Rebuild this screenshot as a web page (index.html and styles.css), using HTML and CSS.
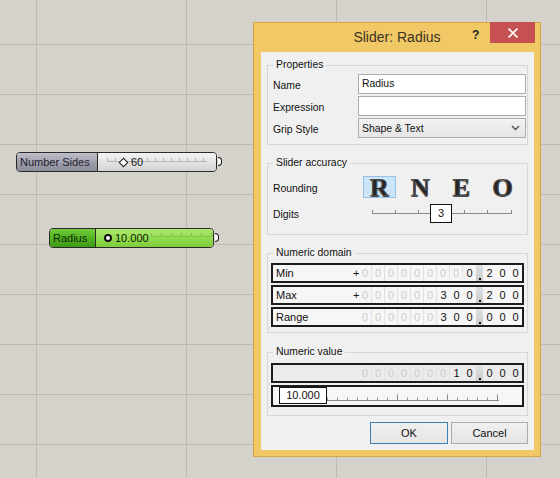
FILE: index.html
```html
<!DOCTYPE html>
<html>
<head>
<meta charset="utf-8">
<title>Slider: Radius</title>
<link rel="stylesheet" href="styles.css">
</head>
<body>
<div class="canvas">
  <div class="comp comp-sides">
    <div class="comp-label">Number Sides</div>
    <div class="comp-slider">
      <span class="grip-diamond"></span><span class="comp-val">60</span>
    </div>
    <span class="nub"></span>
  </div>

  <div class="comp comp-radius">
    <div class="comp-label">Radius</div>
    <div class="comp-slider">
      <span class="grip-circle"></span><span class="comp-val">10.000</span>
    </div>
    <span class="nub"></span>
  </div>

  <div class="dialog">
    <div class="titlebar">
      <div class="title">Slider: Radius</div>
      <span class="help">?</span>
      <span class="close">
        <svg width="10" height="10" viewBox="0 0 10 10"><path d="M0.5 0.5 L9.5 9.5 M9.5 0.5 L0.5 9.5" stroke="#fff" stroke-width="1.6" fill="none"/></svg>
      </span>
    </div>
    <div class="client">
      <div class="group g-props">
        <div class="legend">Properties</div>
        <div class="props">
          <div class="flabel">Name</div>
          <div class="tb">Radius</div>
          <div class="flabel">Expression</div>
          <div class="tb"></div>
          <div class="flabel">Grip Style</div>
          <div class="combo"><span>Shape &amp; Text</span>
            <svg width="9" height="6" viewBox="0 0 9 6"><path d="M1 1 L4.5 4.5 L8 1" stroke="#505050" stroke-width="1.4" fill="none"/></svg>
          </div>
        </div>
      </div>

      <div class="group g-acc">
        <div class="legend">Slider accuracy</div>
        <div class="acc-row round-row">
          <div class="flabel">Rounding</div>
          <div class="letters">
            <span class="lcell sel"><span class="glyph">R</span></span>
            <span class="lcell"><span class="glyph">N</span></span>
            <span class="lcell"><span class="glyph">E</span></span>
            <span class="lcell"><span class="glyph">O</span></span>
          </div>
        </div>
        <div class="acc-row digits-row">
          <div class="flabel">Digits</div>
          <div class="dtrack">
            <svg width="140" height="18" viewBox="0 0 140 18">
              <path d="M0 9.5 H140 M0.5 6 V9.5 M23.5 6 V9.5 M46.5 6 V9.5 M69.5 6 V9.5 M92.5 6 V9.5 M115.5 6 V9.5 M139.5 6 V9.5" stroke="#8a8a8a" stroke-width="1" fill="none"/>
            </svg>
            <span class="dbox">3</span>
          </div>
        </div>
      </div>

      <div class="group g-dom">
        <div class="legend">Numeric domain</div>
        <div class="nrows">
          <div class="nrow">
            <span class="nlabel">Min</span><span class="sign">+</span>
            <span class="d f">0</span><span class="d f">0</span><span class="d f">0</span><span class="d f">0</span><span class="d f">0</span><span class="d f">0</span><span class="d f">0</span><span class="d f">0</span><span class="d">0</span>
            <span class="dot"></span>
            <span class="d">2</span><span class="d">0</span><span class="d">0</span>
          </div>
          <div class="nrow">
            <span class="nlabel">Max</span><span class="sign">+</span>
            <span class="d f">0</span><span class="d f">0</span><span class="d f">0</span><span class="d f">0</span><span class="d f">0</span><span class="d f">0</span><span class="d">3</span><span class="d">0</span><span class="d">0</span>
            <span class="dot"></span>
            <span class="d">2</span><span class="d">0</span><span class="d">0</span>
          </div>
          <div class="nrow">
            <span class="nlabel">Range</span><span class="sign"></span>
            <span class="d f">0</span><span class="d f">0</span><span class="d f">0</span><span class="d f">0</span><span class="d f">0</span><span class="d f">0</span><span class="d">3</span><span class="d">0</span><span class="d">0</span>
            <span class="dot"></span>
            <span class="d">0</span><span class="d">0</span><span class="d">0</span>
          </div>
        </div>
      </div>

      <div class="group g-val">
        <div class="legend">Numeric value</div>
        <div class="nrows">
          <div class="nrow gray">
            <span class="nlabel"></span><span class="sign"></span>
            <span class="d f">0</span><span class="d f">0</span><span class="d f">0</span><span class="d f">0</span><span class="d f">0</span><span class="d f">0</span><span class="d f">0</span><span class="d">1</span><span class="d">0</span>
            <span class="dot"></span>
            <span class="d">0</span><span class="d">0</span><span class="d">0</span>
          </div>
          <div class="nrow slide">
            <span class="vbox">10.000</span>
            <svg width="172" height="18" viewBox="0 0 172 18">
              <path d="M0 13.5 H172 M0.5 10.5 V13.5 M10.5 10.5 V13.5 M20.5 10.5 V13.5 M30.5 10.5 V13.5 M40.5 10.5 V13.5 M50.5 10.5 V13.5 M60.5 10.5 V13.5 M70.5 7.5 V13.5 M80.5 10.5 V13.5 M90.5 10.5 V13.5 M100.5 10.5 V13.5 M110.5 10.5 V13.5 M120.5 7.5 V13.5 M130.5 10.5 V13.5 M140.5 10.5 V13.5 M150.5 10.5 V13.5 M160.5 10.5 V13.5 M170.5 7.5 V13.5" stroke="#8a8a8a" stroke-width="1" fill="none"/>
            </svg>
          </div>
        </div>
      </div>

      <div class="btns">
        <div class="btn ok">OK</div>
        <div class="btn cancel">Cancel</div>
      </div>
    </div>
  </div>
</div>
</body>
</html>
```
FILE: styles.css
```css
html, body {
  margin: 0;
  padding: 0;
}
body {
  font-family: "Liberation Sans", Arial, sans-serif;
  color: #1a1a1a;
}
.canvas {
  position: relative;
  width: 560px;
  height: 478px;
  overflow: hidden;
  background-color: #d5d1cb;
  background-image:
    linear-gradient(90deg, #bdb9b3 1px, transparent 1px),
    linear-gradient(#bdb9b3 1px, transparent 1px);
  background-size: 150px 50px;
  background-position: 36px 0, 0 44px;
}

/* canvas components */
.comp {
  position: absolute;
  display: flex;
  height: 20px;
  box-sizing: border-box;
  border: 1px solid #2a2a2a;
  border-radius: 4px;
  font-size: 11px;
  line-height: 18px;
}
.comp-sides { left: 16px; top: 152px; width: 201px; }
.comp-radius { left: 49px; top: 228px; width: 165px; }
.comp-label {
  box-sizing: border-box;
  padding-left: 3px;
  border-right: 1px solid #2a2a2a;
  border-radius: 3px 0 0 3px;
  white-space: nowrap;
}
.comp-slider {
  flex: 1;
  display: flex;
  align-items: center;
  border-radius: 0 3px 3px 0;
}
.comp-sides .comp-label {
  width: 81px;
  color: #1f1f2a;
  background: linear-gradient(#c0c0cc, #9a9aa9 60%, #8c8c9b);
}
.comp-sides .comp-slider {
  background:
    linear-gradient(#b4b4b4, #b4b4b4) no-repeat 9px 8px / 100px 1px,
    repeating-linear-gradient(90deg, #b4b4b4 0 1px, transparent 1px 8px) no-repeat 9px 5px / 101px 3px,
    linear-gradient(#f4f4f4, #e2e2e2 55%, #d3d3d3);
}
.comp-radius .comp-label {
  width: 46px;
  color: #0f2a00;
  background: linear-gradient(#72cc3c, #4fb222 55%, #3e9a14);
}
.comp-radius .comp-slider {
  background:
    linear-gradient(#7fbf4a, #7fbf4a) no-repeat 55px 7px / 60px 1px,
    repeating-linear-gradient(90deg, #7fbf4a 0 1px, transparent 1px 10px) no-repeat 55px 4px / 61px 3px,
    linear-gradient(#aee872, #93dc52 50%, #7fcc3c);
  color: #0c1a00;
}
.grip-diamond {
  width: 5px;
  height: 5px;
  margin-left: 22px;
  border: 1.5px solid #111;
  background: #fff;
  transform: rotate(45deg);
}
.grip-circle {
  width: 4px;
  height: 4px;
  margin-left: 8px;
  border: 2px solid #111;
  border-radius: 50%;
  background: #fff;
}
.comp-val { margin-left: 4px; }
.comp-radius .comp-val { margin-left: 3px; }
.nub {
  position: absolute;
  right: -6px;
  top: 4px;
  width: 3px;
  height: 7px;
  border: 1.5px solid #111;
  border-left: none;
  border-radius: 0 5px 5px 0;
  background: #fff;
}

/* dialog window */
.dialog {
  position: absolute;
  left: 253px;
  top: 22px;
  width: 288px;
  height: 435px;
  box-sizing: border-box;
  border: 1px solid #d6a646;
  background: #f1c866;
  padding: 0 6px 6px 7px;
  display: flex;
  flex-direction: column;
}
.titlebar {
  position: relative;
  height: 29px;
  flex: none;
}
.title {
  text-align: center;
  font-size: 14px;
  line-height: 29px;
  color: #3a3222;
  margin-right: -6px;
  margin-left: -7px;
}
.help {
  position: absolute;
  left: 211px;
  top: 5px;
  font-size: 12px;
  font-weight: bold;
  color: #222;
}
.close {
  position: absolute;
  right: -1px;
  top: -1px;
  width: 45px;
  height: 21px;
  background: #c75050;
  display: flex;
  align-items: center;
  justify-content: center;
}
.client {
  flex: 1;
  background: #f0f0f0;
  padding: 0 6px;
  font-size: 10.4px;
  color: #111;
}
.group {
  border: 1px solid #d7d7d7;
}
.legend {
  width: max-content;
  height: 12px;
  line-height: 12px;
  margin: -7px 0 0 5px;
  padding: 0 3px;
  background: #f0f0f0;
}
.g-props { margin-top: 13px; padding-bottom: 6px; }
.g-acc { margin-top: 18px; padding-bottom: 12px; }
.g-dom { margin-top: 18px; padding-bottom: 5px; }
.g-val { margin-top: 19px; padding-bottom: 8px; }

.props {
  display: grid;
  grid-template-columns: 85px 168px;
  grid-auto-rows: 20px;
  row-gap: 2px;
  margin-top: 3px;
  padding-left: 5px;
}
.flabel {
  display: flex;
  align-items: center;
  padding-top: 3px;
  box-sizing: border-box;
  white-space: nowrap;
}
.tb {
  box-sizing: border-box;
  border: 1px solid #abadb3;
  background: #fff;
  padding-left: 3px;
  line-height: 18px;
}
.combo {
  box-sizing: border-box;
  border: 1px solid #acacac;
  background: linear-gradient(#f3f3f3, #e5e5e5);
  display: flex;
  align-items: center;
  justify-content: space-between;
  padding: 0 5px 0 3px;
}

.acc-row {
  display: grid;
  grid-template-columns: 85px auto;
  padding-left: 5px;
}
.round-row { margin-top: 7px; height: 22px; }
.digits-row { margin-top: 6px; height: 18px; }
.letters {
  display: flex;
  gap: 8px;
  margin-left: 5px;
}
.lcell {
  width: 33px;
  height: 22px;
  box-sizing: border-box;
  border: 1px solid transparent;
  display: flex;
  justify-content: center;
}
.lcell.sel {
  background: #cce4f7;
  border-color: #96c2e6;
}
.glyph {
  font-family: "Liberation Serif", "DejaVu Serif", serif;
  font-weight: bold;
  font-size: 26px;
  line-height: 22px;
  color: #262626;
  -webkit-text-stroke: 0.35px rgba(255, 255, 255, 0.55);
  text-shadow: 0.5px 0 0 #2a2a2a, -0.5px 0 0 #2a2a2a, 0 0.5px 0 #2a2a2a, 0 -0.5px 0 #2a2a2a;
}
.dtrack {
  position: relative;
  width: 140px;
  height: 18px;
  margin-left: 14px;
}
.dtrack svg { display: block; }
.dbox {
  position: absolute;
  left: 58px;
  top: 0;
  width: 22px;
  height: 19px;
  box-sizing: border-box;
  border: 1px solid #111;
  background: #fff;
  text-align: center;
  line-height: 17px;
  font-size: 11px;
}

.nrows {
  display: flex;
  flex-direction: column;
  gap: 2px;
  margin: 4px 3px 0;
}
.g-val .nrows { margin-top: 5px; }
.nrow {
  display: flex;
  height: 20px;
  box-sizing: border-box;
  border: 2px solid #1c1c1c;
  background: #f6f6f6;
  font-size: 11px;
  line-height: 16px;
}
.nrow.gray { background: #ebebeb; }
.nlabel {
  flex: 1;
  padding-left: 3px;
}
.sign {
  width: 6px;
  text-align: center;
}
.d {
  width: 13px;
  box-sizing: border-box;
  text-align: center;
  color: #111;
}
.d.f {
  color: #cdcdcd;
  border-right: 1px solid #e1e1e1;
}
.dot {
  width: 7px;
  background:
    linear-gradient(#111, #111) no-repeat 50% calc(100% - 1px) / 2px 2px,
    linear-gradient(#e2e2e2, #c9c9c9);
}
.nrow.slide {
  height: 22px;
  padding-left: 6px;
  align-items: flex-start;
}
.nrow.slide svg { display: block; }
.vbox {
  width: 48px;
  height: 17px;
  box-sizing: border-box;
  border: 1px solid #111;
  background: #fff;
  text-align: center;
  line-height: 15px;
}

.btns {
  display: flex;
  justify-content: flex-end;
  gap: 3px;
  margin-top: 6px;
}
.btn {
  height: 22px;
  box-sizing: border-box;
  border: 1px solid #acacac;
  background: linear-gradient(#f0f0f0, #e5e5e5);
  text-align: center;
  line-height: 20px;
  font-size: 11px;
}
.btn.ok { width: 78px; border-color: #3c7fb1; }
.btn.cancel { width: 77px; }
```
